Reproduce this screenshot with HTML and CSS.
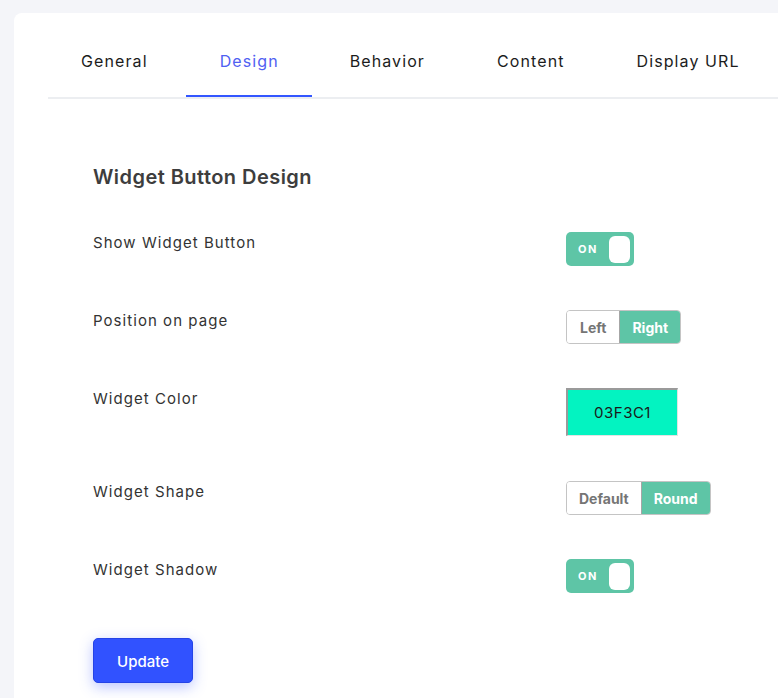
FILE: index.html
```html
<!DOCTYPE html>
<html>
<head>
<meta charset="utf-8">
<link rel="stylesheet" href="styles.css">
</head>
<body>
<div class="page">
  <div class="card">
    <nav class="tabs">
      <div class="tab">General</div>
      <div class="tab active">Design</div>
      <div class="tab">Behavior</div>
      <div class="tab">Content</div>
      <div class="tab">Display URL</div>
    </nav>
    <section class="content">
      <h2 class="heading">Widget Button Design</h2>
      <div class="form">
        <div class="label">Show Widget Button</div>
        <div class="control"><div class="toggle"><span class="on">ON</span><span class="knob"></span></div></div>

        <div class="label">Position on page</div>
        <div class="control"><div class="seg"><span class="opt lr">Left</span><span class="opt sel">Right</span></div></div>

        <div class="label">Widget Color</div>
        <div class="control"><div class="color">03F3C1</div></div>

        <div class="label">Widget Shape</div>
        <div class="control"><div class="seg"><span class="opt">Default</span><span class="opt sel">Round</span></div></div>

        <div class="label">Widget Shadow</div>
        <div class="control"><div class="toggle"><span class="on">ON</span><span class="knob"></span></div></div>
      </div>
      <button class="update">Update</button>
    </section>
  </div>
</div>
</body>
</html>
```
FILE: styles.css
```css
html, body {
  margin: 0;
  padding: 0;
  background: #f4f5f9;
  font-family: "Inter", "Noto Sans", sans-serif;
  overflow: hidden;
}
.page {
  padding: 13px 0 0 14px;
  height: 698px;
  box-sizing: border-box;
}
.card {
  background: #fff;
  border-radius: 8px 0 0 0;
  width: 900px;
  height: 800px;
  padding: 0 0 0 34px;
  box-sizing: border-box;
}
.tabs {
  display: flex;
  gap: 4px;
  border-bottom: 2px solid #eceef1;
}
.tab {
  padding: 36px 34px 22px;
  line-height: 24px;
  font-size: 16px;
  letter-spacing: 1.1px;
  color: #1c1c1c;
  border-bottom: 2px solid transparent;
}
.tab:first-child { padding-left: 33px; }
.tab.active {
  padding-right: 33px;
  color: #5060f2;
  border-bottom-color: #3356ff;
}
.content {
  padding: 66px 0 0 45px;
}
.heading {
  margin: 0 0 43px;
  font-size: 20px;
  line-height: 24px;
  font-weight: 600;
  color: #3d3d3d;
  letter-spacing: 0.45px;
}
.form {
  display: grid;
  grid-template-columns: 473px auto;
  row-gap: 44px;
  align-items: start;
  margin-bottom: 45px;
}
.label {
  padding-top: 1px;
  font-size: 15px;
  line-height: 20px;
  color: #333;
  letter-spacing: 1.05px;
}
.control {
  display: flex;
}
.toggle {
  width: 68px;
  height: 34px;
  background: #5ec5a6;
  border-radius: 5px;
  box-sizing: border-box;
  display: flex;
  align-items: center;
  justify-content: space-between;
  padding: 0 4px 0 12px;
}
.on {
  color: #fff;
  font-size: 11px;
  font-weight: 700;
  letter-spacing: 1.6px;
}
.knob {
  width: 21px;
  height: 27px;
  background: #fff;
  border-radius: 6px;
}
.seg {
  display: flex;
  height: 34px;
  border: 1px solid #c4c4c4;
  border-radius: 4px;
  box-sizing: border-box;
  overflow: hidden;
}
.opt {
  display: flex;
  align-items: center;
  padding: 0 12px;
  font-size: 14px;
  font-weight: 700;
  color: #757575;
  background: #fff;
}
.opt.lr { padding: 0 13px; }
.opt.sel {
  background: #5ec5a6;
  color: #fff;
  border-left: 1px solid #a6a6a6;
}
.color {
  width: 112px;
  height: 48px;
  margin-bottom: 1px;
  box-sizing: border-box;
  background: #03f3c1;
  border-top: 2px solid #9a9a9a;
  border-left: 2px solid #9a9a9a;
  border-right: 1px solid #e3e3e3;
  border-bottom: 1px solid #e3e3e3;
  display: flex;
  align-items: center;
  justify-content: center;
  font-size: 15px;
  letter-spacing: 0.5px;
  color: #1a1a1a;
}
.update {
  width: 100px;
  height: 45px;
  padding-top: 2px;
  background: #3152ff;
  border: 1px solid #2544e6;
  border-radius: 5px;
  color: #fff;
  font-family: inherit;
  font-size: 15px;
  font-weight: 500;
  box-shadow: 0 4px 14px rgba(60, 90, 255, 0.35);
}
```
